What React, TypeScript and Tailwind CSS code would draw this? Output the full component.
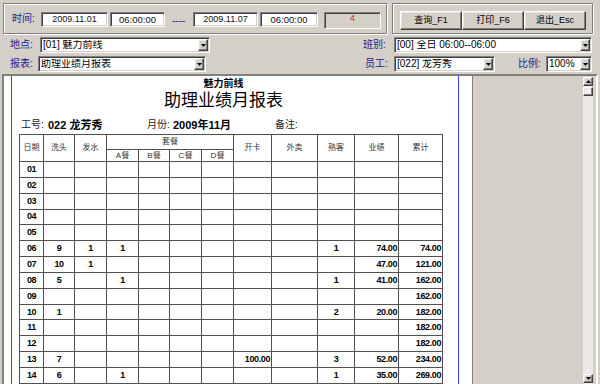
import React from 'react';

const sunken =
  'border border-t-[#808080] border-l-[#808080] border-b-white border-r-white shadow-[inset_1px_1px_0_#404040,inset_-1px_-1px_0_#d4d0c8]';
const raised =
  'border border-t-white border-l-white border-b-[#404040] border-r-[#404040] shadow-[inset_-1px_-1px_0_#808080,inset_1px_1px_0_#e8e6e2]';
const etched = 'border border-[#808080] shadow-[inset_1px_1px_0_#fff,1px_1px_0_#fff]';

function Arrow({ up = false }: { up?: boolean }) {
  return (
    <svg width="5" height="3" viewBox="0 0 5 3">
      <path d={up ? 'M2.5 0 L5 3 L0 3 Z' : 'M0 0 L5 0 L2.5 3 Z'} fill="#000" />
    </svg>
  );
}

function Select({ value, className }: { value: string; className: string }) {
  return (
    <div className={`${sunken} bg-white h-[16px] flex items-center ${className}`}>
      <span className="flex-1 pl-[2px] text-[10px] leading-none text-black whitespace-nowrap overflow-hidden">{value}</span>
      <div className={`${raised} bg-[#d4d0c8] w-[10px] h-[12px] mr-[1px] flex items-center justify-center`}>
        <Arrow />
      </div>
    </div>
  );
}

function Field({ value, className }: { value: string; className: string }) {
  return (
    <div className={`${sunken} bg-white h-[15px] mt-[8px] flex items-center justify-center text-[#111] leading-none ${className}`}>
      {value}
    </div>
  );
}

function Label({ text, className }: { text: string; className: string }) {
  return <span className={`text-[10px] leading-none text-[#1c1c96] whitespace-nowrap ${className}`}>{text}</span>;
}

// 日期, 洗头, 发水, A, B, C, D, 开卡, 外卖, 熟客, 业绩, 累计
const colWidths = [24, 31, 32, 32, 31, 32, 32, 38, 46, 37, 44, 44];

const rows: string[][] = [
  ['01', '', '', '', '', '', '', '', '', '', '', ''],
  ['02', '', '', '', '', '', '', '', '', '', '', ''],
  ['03', '', '', '', '', '', '', '', '', '', '', ''],
  ['04', '', '', '', '', '', '', '', '', '', '', ''],
  ['05', '', '', '', '', '', '', '', '', '', '', ''],
  ['06', '9', '1', '1', '', '', '', '', '', '1', '74.00', '74.00'],
  ['07', '10', '1', '', '', '', '', '', '', '', '47.00', '121.00'],
  ['08', '5', '', '1', '', '', '', '', '', '1', '41.00', '162.00'],
  ['09', '', '', '', '', '', '', '', '', '', '', '162.00'],
  ['10', '1', '', '', '', '', '', '', '', '2', '20.00', '182.00'],
  ['11', '', '', '', '', '', '', '', '', '', '', '182.00'],
  ['12', '', '', '', '', '', '', '', '', '', '', '182.00'],
  ['13', '7', '', '', '', '', '', '100.00', '', '3', '52.00', '234.00'],
  ['14', '6', '', '1', '', '', '', '', '', '1', '35.00', '269.00'],
];

const alignFor = (i: number) => (i === 7 || i === 10 || i === 11 ? 'text-right pr-[1px]' : 'text-center');

export default function App() {
  const th = 'border border-[#505050] font-normal text-[8px] leading-none text-[#333] p-0';
  const td = 'border border-[#505050] text-[9px] leading-none font-bold text-black p-0 tracking-[-0.4px]';

  return (
    <div className="w-[600px] h-[384px] bg-[#d4d0c8] overflow-hidden flex flex-col font-['Liberation_Sans','Noto_Sans_CJK_SC',sans-serif]">
      {/* Time + buttons */}
      <div className="flex px-[3px] pt-[3px] h-[34px]">
        <div className={`${etched} w-[384px] h-[31px] flex items-start pl-[8px]`}>
          <Label text="时间:" className="w-[29px] mt-[10px]" />
          <Field value="2009.11.01" className="w-[67px] text-[9px]" />
          <Field value="06:00:00" className="w-[55px] ml-[2px] text-[9.5px]" />
          <span className="w-[21px] ml-[7px] mt-[12px] text-[10px] leading-none text-[#1c1c96]">----</span>
          <Field value="2009.11.07" className="w-[65px] text-[9px]" />
          <Field value="06:00:00" className="w-[58px] ml-[2px] text-[9.5px]" />
          <div className={`${sunken} bg-[#d4d0c8] w-[57px] h-[17px] ml-[6px] mt-[8px] flex justify-center pt-[1px] text-[9px] leading-none text-[#e02020]`}>
            4
          </div>
        </div>
        <div className={`${etched} ml-[5px] w-[201px] h-[31px] flex items-start pl-[7px]`}>
          {['查询_F1', '打印_F6', '退出_Esc'].map(b => (
            <div key={b} className={`${raised} bg-[#d4d0c8] w-[62px] h-[19px] mt-[7px] flex items-center justify-center text-[9px] leading-none text-black`}>
              {b}
            </div>
          ))}
        </div>
      </div>

      {/* Filters */}
      <div className="flex items-center mt-[3px] h-[16px] pl-[10px]">
        <Label text="地点:" className="w-[30px]" />
        <Select value="[01] 魅力前线" className="w-[170px]" />
        <Label text="班别:" className="w-[31px] ml-[153px]" />
        <Select value="[00] 全日 06:00--06:00" className="w-[198px]" />
      </div>
      <div className="flex items-center mt-[3px] h-[16px] pl-[10px]">
        <Label text="报表:" className="w-[28px]" />
        <Select value="助理业绩月报表" className="w-[168px]" />
        <Label text="员工:" className="w-[29px] ml-[159px]" />
        <Select value="[022] 龙芳秀" className="w-[101px]" />
        <Label text="比例:" className="w-[28px] ml-[23px]" />
        <Select value="100%" className="w-[46px]" />
      </div>

      {/* Report viewer */}
      <div className="mt-[2px] mx-[2px] flex-1 flex flex-col border-2 border-t-[#808080] border-l-[#808080] border-r-white border-b-[#d4d0c8] shadow-[inset_1px_1px_0_#404040]">
        <div className="flex flex-1 min-h-0">
          <div className="relative w-[468px] bg-white overflow-hidden">
            <div className="absolute top-0 bottom-0 left-[7px] w-px bg-[#4040ff]" />
            <div className="absolute top-0 bottom-0 left-[454px] w-px bg-[#4040ff]" />

            <div className="ml-[7px] w-[425px] pt-[2px] text-center text-black">
              <div className="text-[10px] leading-[11px] font-bold">魅力前线</div>
              <div className="mt-[2px] text-[17px] leading-[20px] font-normal">助理业绩月报表</div>
            </div>

            <div className="flex items-center mt-[7px] ml-[17px] h-[14px] text-black leading-none">
              <span className="w-[27px] text-[10px] text-[#222]">工号:</span>
              <span className="w-[99px] text-[11px] font-bold">022 龙芳秀</span>
              <span className="w-[26px] text-[10px] text-[#222]">月份:</span>
              <span className="w-[102px] text-[11px] font-bold">2009年11月</span>
              <span className="text-[10px] text-[#222]">备注:</span>
            </div>

            <table className="mt-[2px] ml-[15px] table-fixed border-collapse" style={{ width: 423 }}>
              <colgroup>
                {colWidths.map((w, i) => (
                  <col key={i} style={{ width: w }} />
                ))}
              </colgroup>
              <thead>
                <tr className="h-[15px]">
                  <th rowSpan={2} className={th}>日期</th>
                  <th rowSpan={2} className={th}>洗头</th>
                  <th rowSpan={2} className={th}>发水</th>
                  <th colSpan={4} className={th}>套餐</th>
                  <th rowSpan={2} className={th}>开卡</th>
                  <th rowSpan={2} className={th}>外卖</th>
                  <th rowSpan={2} className={th}>熟客</th>
                  <th rowSpan={2} className={th}>业绩</th>
                  <th rowSpan={2} className={th}>累计</th>
                </tr>
                <tr className="h-[12px]">
                  <th className={th}>A餐</th>
                  <th className={th}>B餐</th>
                  <th className={th}>C餐</th>
                  <th className={th}>D餐</th>
                </tr>
              </thead>
              <tbody>
                {rows.map(r => (
                  <tr key={r[0]} className="h-[15.85px]">
                    {r.map((c, i) => (
                      <td key={i} className={`${td} ${alignFor(i)}`}>
                        {c}
                      </td>
                    ))}
                  </tr>
                ))}
              </tbody>
            </table>
          </div>

          <div className="w-px bg-[#808080]" />
          <div className="flex-1 bg-[#d4d0c8] flex justify-end pr-[3px] pt-px">
            {/* vertical scrollbar */}
            <div className="w-[10px] h-full bg-[#ebe9e5] flex flex-col">
              <div className={`${raised} bg-[#d4d0c8] h-[9px] flex items-center justify-center`}>
                <Arrow up />
              </div>
              <div className={`${raised} bg-[#f2f1ee] h-[9px] mt-px`} />
              <div className="flex-1" />
              <div className={`${raised} bg-[#d4d0c8] h-[9px] mb-[1px] flex items-center justify-center`}>
                <Arrow />
              </div>
            </div>
          </div>
        </div>
        <div className="h-[5px] bg-[#e2e0db] border-t border-[#c8c5bd]" />
      </div>
    </div>
  );
}
